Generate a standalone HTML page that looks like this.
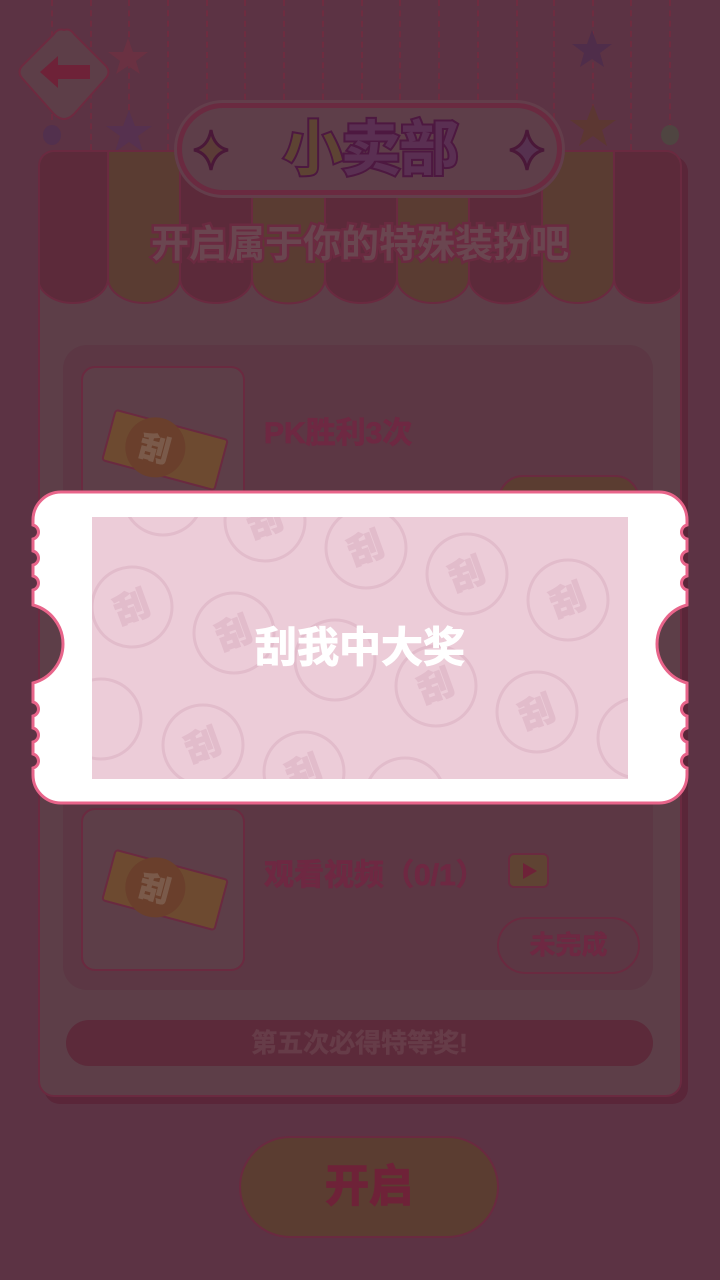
<!DOCTYPE html>
<html><head><meta charset="utf-8">
<style>
*{margin:0;padding:0;box-sizing:border-box}
body{width:720px;height:1280px;background:#5c3344;position:relative;overflow:hidden;font-family:"Liberation Sans","Noto Sans CJK SC",sans-serif;font-weight:bold}
.abs{position:absolute}
.str{position:absolute;top:0;width:0;border-left:2px dashed #6e2c40}
</style></head><body>
<div class="str" style="left:51px;height:120px"></div>
<div class="str" style="left:90px;height:150px"></div>
<div class="str" style="left:128px;height:110px"></div>
<div class="str" style="left:167px;height:150px"></div>
<div class="str" style="left:206px;height:110px"></div>
<div class="str" style="left:244px;height:110px"></div>
<div class="str" style="left:283px;height:110px"></div>
<div class="str" style="left:322px;height:110px"></div>
<div class="str" style="left:361px;height:110px"></div>
<div class="str" style="left:399px;height:110px"></div>
<div class="str" style="left:438px;height:110px"></div>
<div class="str" style="left:477px;height:110px"></div>
<div class="str" style="left:516px;height:110px"></div>
<div class="str" style="left:553px;height:150px"></div>
<div class="str" style="left:592px;height:110px"></div>
<div class="str" style="left:630px;height:150px"></div>
<div class="str" style="left:669px;height:130px"></div>

<svg class="abs" style="left:0;top:0" width="720" height="320">
  <path d="M64 30 Q70 28 74 34 L106 66 Q111 72 106 78 L74 114 Q64 124 54 114 L22 78 Q17 72 22 66 L54 34 Q58 28 64 30Z" fill="#5d3e48" stroke="#6e2a40" stroke-width="2"/>
  <path d="M40 72 L58 56 V65 H90 V79 H58 V88 Z" fill="#6e2238"/>
  <polygon points="128,38 133,52 148,52 136,61 140,74 128,66 116,74 120,61 108,52 123,52" fill="#6a3142"/>
  <polygon points="129,110 135,126 152,126 138,136 143,152 129,142 115,152 120,136 106,126 123,126" fill="#56314f"/>
  <polygon points="592,30 597,44 612,44 600,53 604,67 592,59 580,67 584,53 572,44 587,44" fill="#4f2d4a"/>
  <polygon points="593,104 599,120 616,120 602,130 607,146 593,136 579,146 584,130 570,120 587,120" fill="#5c3732"/>
  <ellipse cx="52" cy="135" rx="9" ry="10" fill="#52304d"/>
  <ellipse cx="670" cy="135" rx="9" ry="10" fill="#4f4541"/>
</svg>

<div class="abs" style="left:44px;top:156px;width:644px;height:948px;border-radius:16px;background:#5a2639"></div>
<div class="abs" style="left:38px;top:150px;width:644px;height:947px;border-radius:16px;background:#5d3e48;border:2px solid #6a2a40;overflow:hidden">
 <svg class="abs" style="left:-2px;top:-2px" width="644" height="160">
  <g stroke="#6a2a40" stroke-width="2">
   <path d="M0 0 H70 V128 A35 25 0 0 1 0 128 Z" fill="#5c2a3a"/>
   <path d="M70 0 H142 V128 A36 25 0 0 1 70 128 Z" fill="#5a3c32"/>
   <path d="M142 0 H214 V128 A36 25 0 0 1 142 128 Z" fill="#5c2a3a"/>
   <path d="M214 0 H287 V128 A36 25 0 0 1 214 128 Z" fill="#5a3c32"/>
   <path d="M287 0 H359 V128 A36 25 0 0 1 287 128 Z" fill="#5c2a3a"/>
   <path d="M359 0 H431 V128 A36 25 0 0 1 359 128 Z" fill="#5a3c32"/>
   <path d="M431 0 H504 V128 A36 25 0 0 1 431 128 Z" fill="#5c2a3a"/>
   <path d="M504 0 H576 V128 A36 25 0 0 1 504 128 Z" fill="#5a3c32"/>
   <path d="M576 0 H646 V128 A35 25 0 0 1 576 128 Z" fill="#5c2a3a"/>
  </g>
 </svg>
</div>

<div class="abs" style="left:177px;top:103px;width:385px;height:92px;border-radius:46px;background:#5e3e49;border:5px solid #6a2a40;box-shadow:0 0 0 3px #633e4b"></div>
<svg class="abs" style="left:190px;top:125px" width="360" height="50">
 <path d="M21 5 Q24 22 38 25 Q24 28 21 45 Q18 28 4 25 Q18 22 21 5Z" fill="#5b3c37" stroke="#4a1838" stroke-width="3"/>
 <path d="M337 5 Q340 22 354 25 Q340 28 337 45 Q334 28 320 25 Q334 22 337 5Z" fill="#56314f" stroke="#4a1838" stroke-width="3"/>
</svg>
<div class="abs" style="left:260px;top:110px;width:220px;text-align:center;font-size:60px;line-height:80px;color:#5a2f52;-webkit-text-stroke:4px #4d1840;paint-order:stroke fill;letter-spacing:-2px"><span style="color:#5d4333">小</span>卖部</div>

<div class="abs" style="left:0;top:219px;width:720px;text-align:center;font-size:38px;line-height:52px;color:#6a4650;-webkit-text-stroke:5px #6a2a40;paint-order:stroke fill">开启属于你的特殊装扮吧</div>

<div class="abs" style="left:63px;top:345px;width:590px;height:645px;border-radius:24px;background:#5c3744"></div>
<div class="abs" style="left:81px;top:366px;width:164px;height:164px;border-radius:14px;border:2px solid #6a2a40;background:#5d3e48"></div>
<div class="abs" style="left:81px;top:808px;width:164px;height:163px;border-radius:14px;border:2px solid #6a2a40;background:#5d3e48"></div>
<svg class="abs" style="left:95px;top:400px" width="140" height="100">
 <g transform="rotate(15 70 50)"><rect x="12" y="24" width="116" height="52" rx="3" fill="#6d4a30" stroke="#6a2a40" stroke-width="2"/><circle cx="60" cy="50" r="30" fill="#6a3f2c"/><text x="60" y="62" text-anchor="middle" font-size="30" fill="#7a5a4a" stroke="#7a5a4a" stroke-width="1.5" font-family="Liberation Sans,Noto Sans CJK SC,sans-serif" font-weight="bold">刮</text></g>
</svg>
<svg class="abs" style="left:95px;top:840px" width="140" height="100">
 <g transform="rotate(15 70 50)"><rect x="12" y="24" width="116" height="52" rx="3" fill="#6d4a30" stroke="#6a2a40" stroke-width="2"/><circle cx="60" cy="50" r="30" fill="#6a3f2c"/><text x="60" y="62" text-anchor="middle" font-size="30" fill="#7a5a4a" stroke="#7a5a4a" stroke-width="1.5" font-family="Liberation Sans,Noto Sans CJK SC,sans-serif" font-weight="bold">刮</text></g>
</svg>
<div class="abs" style="left:264px;top:408px;font-size:30px;color:#6e2842;-webkit-text-stroke:0.8px #6e2842">PK胜利3次</div>
<div class="abs" style="left:498px;top:475px;width:142px;height:50px;border-radius:25px;background:#5b3d31;border:2px solid #6a2a40"></div>
<div class="abs" style="left:264px;top:850px;font-size:30px;color:#6e2842;-webkit-text-stroke:0.8px #6e2842">观看视频（0/1）</div>
<div class="abs" style="left:508px;top:853px;width:41px;height:35px;border-radius:6px;background:#5f4333;border:2px solid #6a2a40"></div>
<svg class="abs" style="left:520px;top:861px" width="20" height="20"><path d="M3 2 L17 10 L3 18Z" fill="#6e2238"/></svg>
<div class="abs" style="left:497px;top:917px;width:143px;height:57px;border-radius:29px;border:2px solid #6a2a40;text-align:center;line-height:53px;font-size:26px;color:#6e2842;-webkit-text-stroke:0.6px #6e2842">未完成</div>

<div class="abs" style="left:66px;top:1020px;width:587px;height:46px;border-radius:23px;background:#5c2a3a;text-align:center;line-height:46px;font-size:26px;color:#663c48;-webkit-text-stroke:0.6px #663c48">第五次必得特等奖!</div>

<div class="abs" style="left:239px;top:1136px;width:260px;height:102px;border-radius:51px;background:#5b3d31;border:2px solid #6a2a40;text-align:center;line-height:98px;font-size:44px;color:#6e2238;-webkit-text-stroke:1.5px #6e2238">开启</div>

<svg class="abs" style="left:0;top:0" width="720" height="1280">
 <path d="M61 492 H659 A28 28 0 0 1 687 520 V525 A7.2 7.2 0 0 0 687 539 V551 A7.2 7.2 0 0 0 687 565 V576 A7.2 7.2 0 0 0 687 590 V605 A40.35 40.35 0 0 0 687 683 V702 A7.2 7.2 0 0 0 687 716 V728 A7.2 7.2 0 0 0 687 742 V754 A7.2 7.2 0 0 0 687 768 V775 A28 28 0 0 1 659 803 H61 A28 28 0 0 1 33 775 V768 A7.2 7.2 0 0 0 33 754 V742 A7.2 7.2 0 0 0 33 728 V716 A7.2 7.2 0 0 0 33 702 V683 A40.35 40.35 0 0 0 33 605 V590 A7.2 7.2 0 0 0 33 576 V565 A7.2 7.2 0 0 0 33 551 V539 A7.2 7.2 0 0 0 33 525 V520 A28 28 0 0 1 61 492Z" fill="#fff" stroke="#e8648a" stroke-width="3"/>
 <defs><clipPath id="c"><rect x="92" y="517" width="536" height="262"/></clipPath></defs>
 <rect x="92" y="517" width="536" height="262" fill="#ecccd8"/>
 <g clip-path="url(#c)" fill="none" stroke="#e2bccb" stroke-width="3" font-family="Liberation Sans,Noto Sans CJK SC,sans-serif" font-weight="bold" font-size="34">
  <g>
   <circle cx="163" cy="495" r="40"/><circle cx="265" cy="521" r="40"/><circle cx="366" cy="548" r="40"/><circle cx="467" cy="574" r="40"/><circle cx="568" cy="600" r="40"/>
   <circle cx="132" cy="607" r="40"/><circle cx="234" cy="633" r="40"/><circle cx="335" cy="660" r="40"/><circle cx="436" cy="686" r="40"/><circle cx="537" cy="712" r="40"/><circle cx="638" cy="738" r="40"/>
   <circle cx="101" cy="719" r="40"/><circle cx="203" cy="745" r="40"/><circle cx="304" cy="772" r="40"/><circle cx="405" cy="798" r="40"/><circle cx="506" cy="824" r="40"/>
  </g>
  <g fill="#e2bccb" stroke="#e2bccb" stroke-width="2">
   <text x="248" y="533" transform="rotate(-20 265 521)">刮</text><text x="349" y="560" transform="rotate(-20 366 548)">刮</text><text x="450" y="586" transform="rotate(-20 467 574)">刮</text><text x="551" y="612" transform="rotate(-20 568 600)">刮</text>
   <text x="115" y="619" transform="rotate(-20 132 607)">刮</text><text x="217" y="645" transform="rotate(-20 234 633)">刮</text><text x="419" y="698" transform="rotate(-20 436 686)">刮</text><text x="520" y="724" transform="rotate(-20 537 712)">刮</text>
   <text x="186" y="757" transform="rotate(-20 203 745)">刮</text><text x="287" y="784" transform="rotate(-20 304 772)">刮</text>
  </g>
 </g>
 <text x="360" y="662" text-anchor="middle" font-size="42" fill="#fff" stroke="#fff" stroke-width="1" font-family="Liberation Sans,Noto Sans CJK SC,sans-serif" font-weight="bold">刮我中大奖</text>
</svg>
</body></html>
